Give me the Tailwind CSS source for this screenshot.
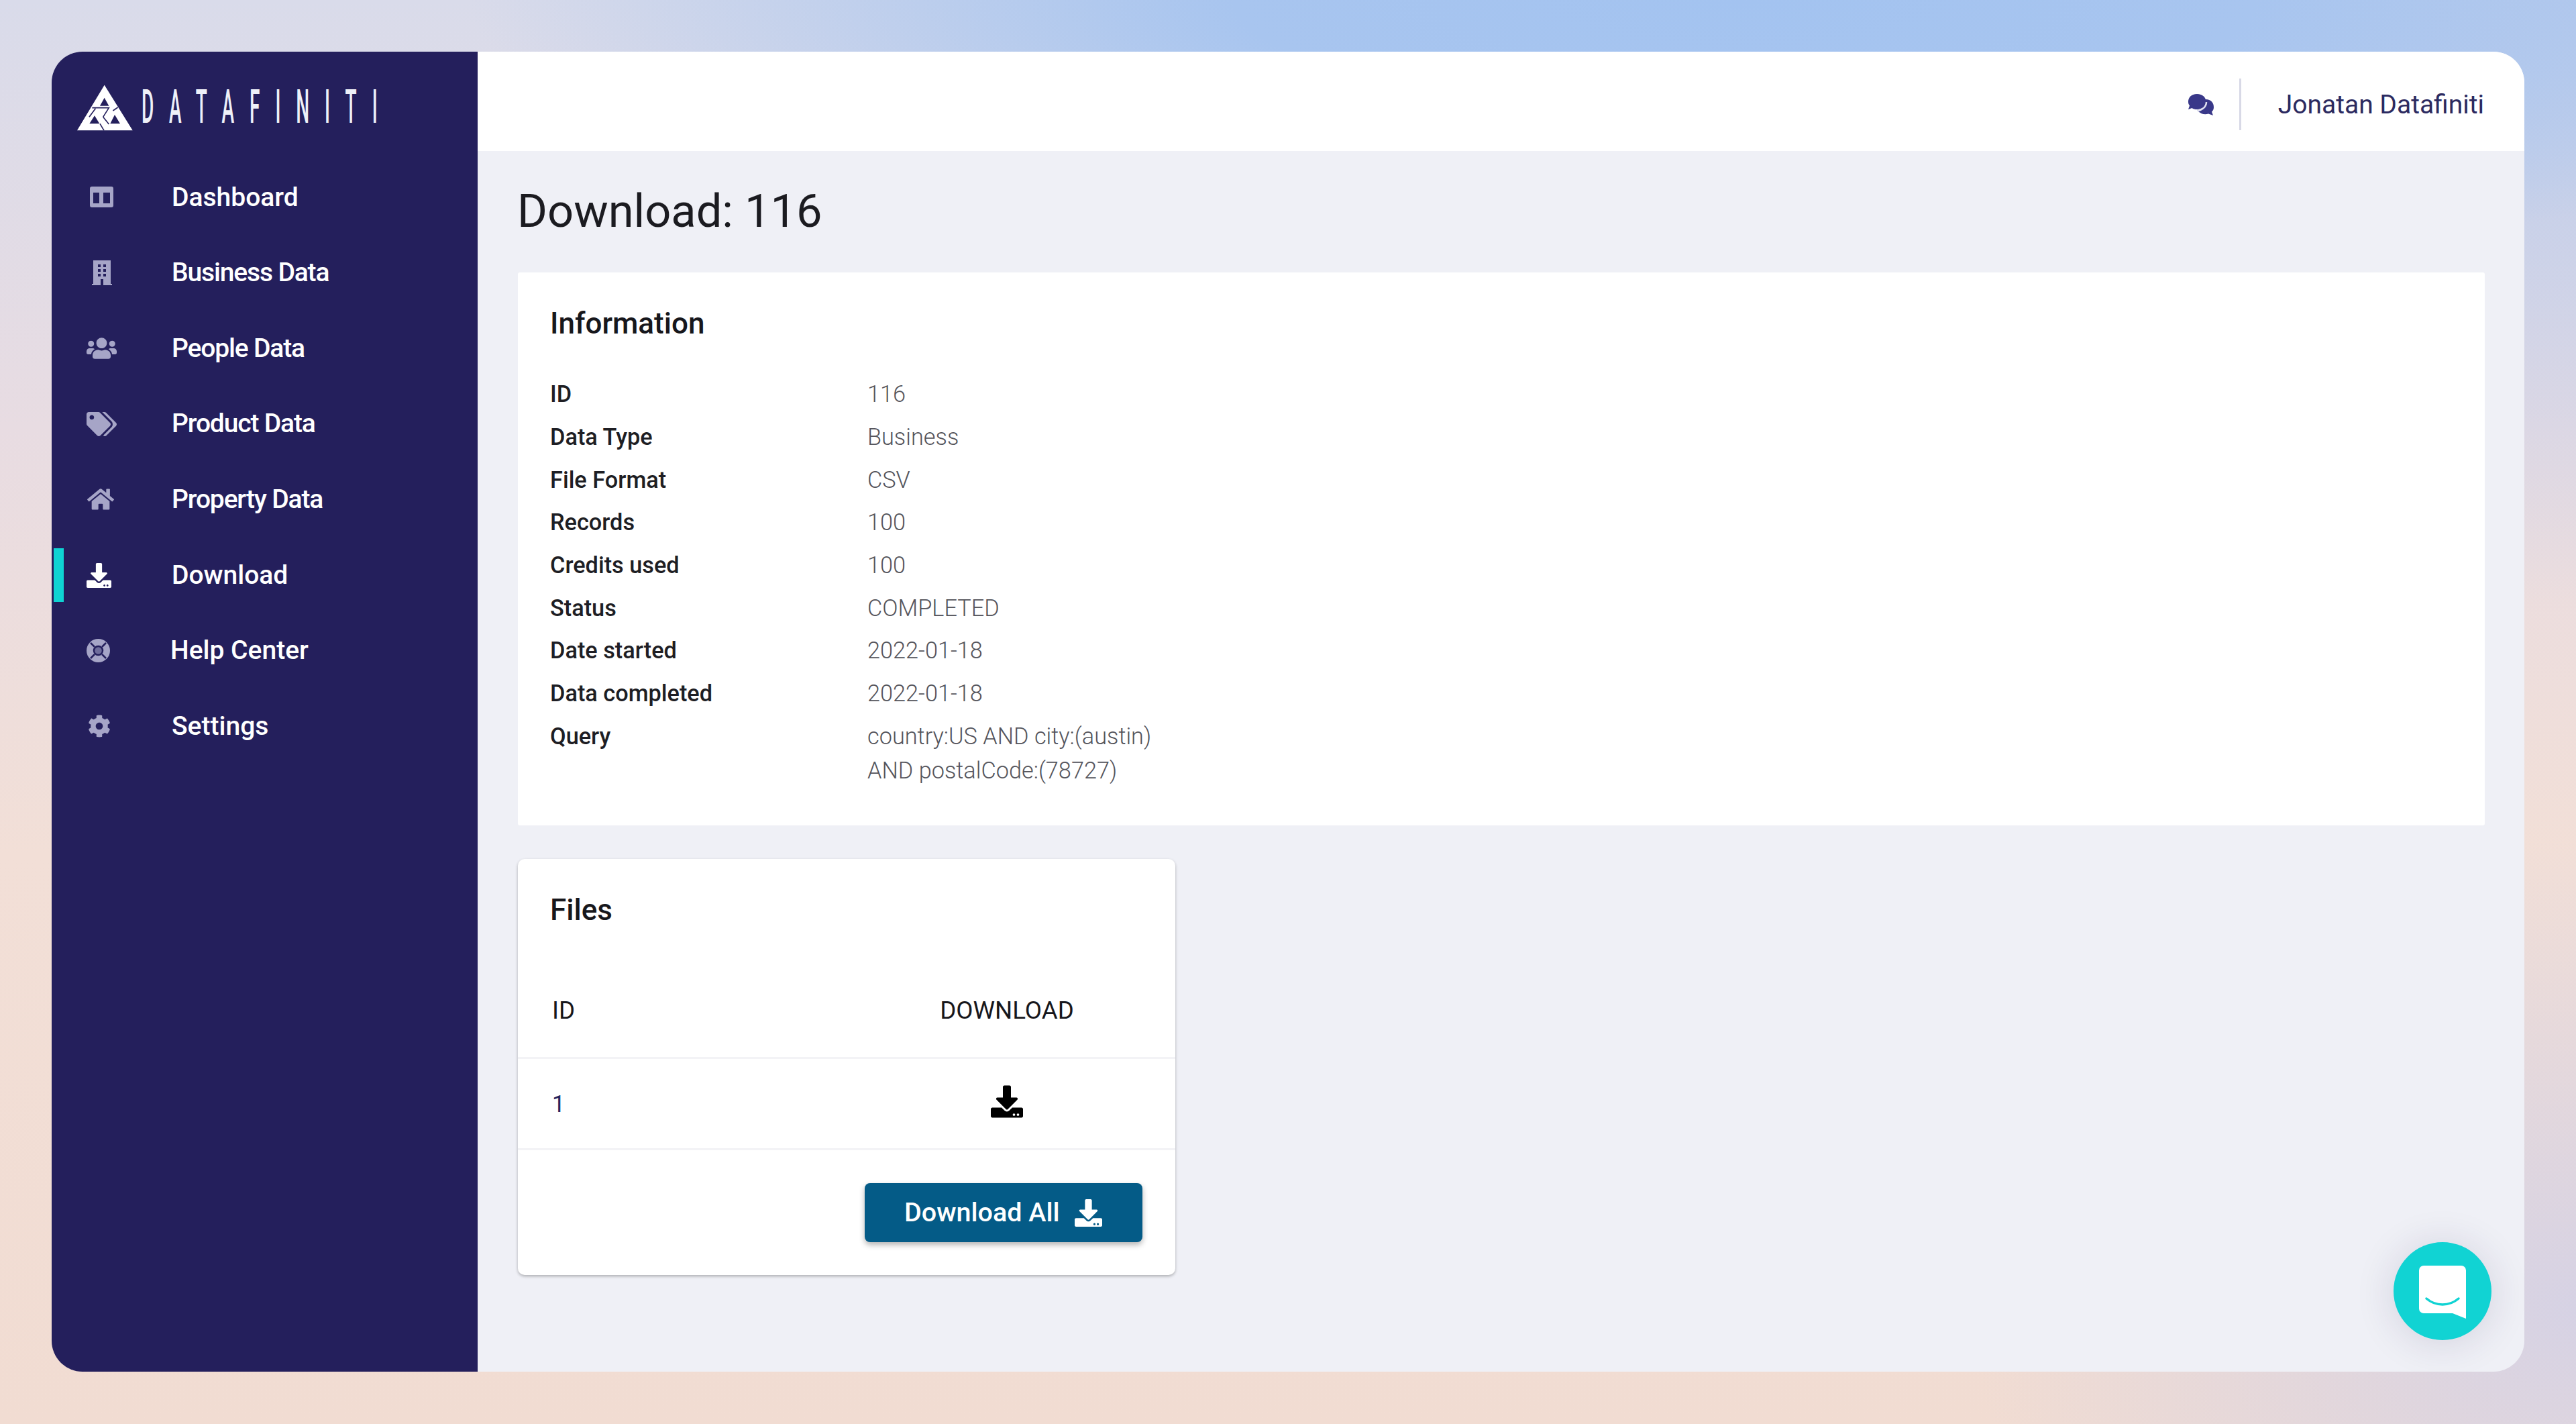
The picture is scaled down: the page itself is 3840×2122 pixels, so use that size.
<!DOCTYPE html>
<html lang="en">
<head>
<meta charset="utf-8">
<title>Download: 116</title>
<script src="https://cdn.jsdelivr.net/npm/@tailwindcss/browser@4"></script>
</head>
<body class="m-0 font-['Roboto',sans-serif]">
<div class="w-[3840px] h-[2122px] pl-[77px] pt-[77px] overflow-hidden bg-[radial-gradient(ellipse_1900px_420px_at_2600px_0px,#a3c3f0_0%,#a8c5ef_40%,rgba(168,197,239,0)_100%),radial-gradient(ellipse_2200px_900px_at_3840px_0px,#bccbea_0%,rgba(188,203,234,0)_100%),radial-gradient(ellipse_900px_700px_at_3840px_1950px,#d6d2e4_0%,rgba(214,210,228,0)_100%),linear-gradient(180deg,#d9dbea_0%,#e8dce2_30%,#f2dfd7_60%,#f1dcd2_100%)]">
  <div class="relative flex w-[3686px] h-[1967px] rounded-[46px] overflow-hidden">
    <aside class="w-[635px] shrink-0 bg-[#241f5c] text-white">
      <div class="flex items-start h-[160.500px] pt-[38px] pl-[28px]">
        <svg class="w-[110px] h-[90px] shrink-0" viewBox="0 0 330 270">
          <path fill="#fff" fill-rule="evenodd" d="M152 35L278 238H30ZM152 92L132 128H172ZM108 172L85 208H130ZM198 168L178 208H222Z"/>
          <path fill="none" stroke="#241f5c" stroke-width="5" d="M97 137H172L146 178M112 140L84 178M132 208L150 238M190 150L212 135M146 178L172 210"/>
        </svg>
        <span class="block mt-[9px] ml-[-4px] w-[20px] text-[70px] leading-[70px] font-medium tracking-[57.400px] whitespace-nowrap origin-left scale-x-[0.4] text-[#eef0f8]">DATAFINITI</span>
      </div>
      <nav class="text-[39px] font-medium">
        <a class="relative flex items-center h-[112.65px]"><svg class="ml-[57px] w-[35px] h-[31px] mr-[87px]" viewBox="0 0 35 31"><path fill="#a6a5c7" fill-rule="evenodd" d="M3 0H32A3 3 0 0 1 35 3V28A3 3 0 0 1 32 31H3A3 3 0 0 1 0 28V3A3 3 0 0 1 3 0ZM5 9V25H14V9ZM20 9V25H30V9Z"/></svg>Dashboard</a>
        <a class="relative flex items-center h-[112.65px] tracking-[-1.150px]"><svg class="ml-[60px] w-[30px] h-[37px] mr-[89px]" viewBox="0 0 30 37"><path fill="#a6a5c7" fill-rule="evenodd" d="M2 0H28V35H30V37H0V35H2ZM9 6V10H13V6ZM17 6V10H21V6ZM9 13V17H13V13ZM17 13V17H21V13ZM9 20V24H13V20ZM17 20V24H21V20ZM13 28V37H17V28Z"/></svg>Business Data</a>
        <a class="relative flex items-center h-[112.65px] tracking-[-1.150px]"><svg class="ml-[52px] w-[45px] h-[36px] mr-[82px]" viewBox="0 0 640 512"><path fill="#a6a5c7" d="M96 224c35.3 0 64-28.7 64-64s-28.7-64-64-64-64 28.7-64 64 28.7 64 64 64zm448 0c35.3 0 64-28.7 64-64s-28.7-64-64-64-64 28.7-64 64 28.7 64 64 64zm32 32h-64c-17.6 0-33.5 7.1-45.1 18.6 40.3 22.1 68.9 62 75.1 109.4h66c17.7 0 32-14.3 32-32v-32c0-35.3-28.7-64-64-64zm-256 0c61.9 0 112-50.1 112-112S381.9 32 320 32 208 82.1 208 144s50.1 112 112 112zm76.8 32h-8.3c-20.8 10-43.9 16-68.5 16s-47.6-6-68.5-16h-8.3C179.6 288 128 339.6 128 403.2V432c0 26.5 21.5 48 48 48h288c26.5 0 48-21.5 48-48v-28.8c0-63.6-51.6-115.2-115.2-115.2zm-223.7-13.4C161.5 263.1 145.6 256 128 256H64c-35.3 0-64 28.7-64 64v32c0 17.7 14.3 32 32 32h65.9c6.3-47.4 34.9-87.3 75.2-109.4z"/></svg>People Data</a>
        <a class="relative flex items-center h-[112.65px] tracking-[-1.150px]"><svg class="ml-[52px] w-[45px] h-[36px] mr-[82px]" viewBox="0 0 640 512"><path fill="#a6a5c7" d="M497.941 225.941L286.059 14.059A48 48 0 0 0 252.118 0H48C21.49 0 0 21.49 0 48v204.118a48 48 0 0 0 14.059 33.941l211.882 211.882c18.744 18.745 49.136 18.746 67.882 0l204.118-204.118c18.745-18.745 18.745-49.137 0-67.882zM112 160c-26.51 0-48-21.49-48-48s21.49-48 48-48 48 21.49 48 48-21.49 48-48 48zm513.941 133.823L421.823 497.941c-18.745 18.745-49.137 18.745-67.882 0l-.36-.36L527.64 323.522c16.999-16.999 26.36-39.6 26.36-63.64s-9.362-46.641-26.36-63.64L331.397 0h48.721a48 48 0 0 1 33.941 14.059l211.882 211.882c18.745 18.745 18.745 49.137 0 67.882z"/></svg>Product Data</a>
        <a class="relative flex items-center h-[112.65px] tracking-[-1.150px]"><svg class="ml-[53px] w-[40px] h-[36px] mr-[86px]" viewBox="0 0 576 512"><path fill="#a6a5c7" d="M280.37 148.26L96 300.11V464a16 16 0 0 0 16 16l112.06-.29a16 16 0 0 0 15.92-16V368a16 16 0 0 1 16-16h64a16 16 0 0 1 16 16v95.64a16 16 0 0 0 16 16.05L464 480a16 16 0 0 0 16-16V300L295.67 148.26a12.19 12.19 0 0 0-15.3 0zM571.6 251.47L488 182.56V44.05a12 12 0 0 0-12-12h-56a12 12 0 0 0-12 12v72.61L318.47 43a48 48 0 0 0-61 0L4.34 251.47a12 12 0 0 0-1.6 16.9l25.5 31A12 12 0 0 0 45.15 301l235.22-193.74a12.19 12.19 0 0 1 15.3 0L530.9 301a12 12 0 0 0 16.9-1.6l25.5-31a12 12 0 0 0-1.7-16.93z"/></svg>Property Data</a>
        <a class="relative flex items-center h-[112.65px]"><span class="absolute left-[3px] top-[16px] w-[15px] h-[80px] bg-[#0fd3d3]"></span><svg class="ml-[52px] w-[37px] h-[37px] mr-[90px]" viewBox="0 0 512 512"><path fill="#fff" d="M216 0h80c13.3 0 24 10.7 24 24v168h87.7c17.8 0 26.7 21.5 14.1 34.1L269.7 378.3c-7.5 7.5-19.8 7.5-27.3 0L90.1 226.1c-12.6-12.6-3.7-34.1 14.1-34.1H192V24c0-13.3 10.7-24 24-24zm296 376v112c0 13.3-10.7 24-24 24H24c-13.3 0-24-10.7-24-24V376c0-13.3 10.7-24 24-24h146.7l49 49c20.1 20.1 52.5 20.1 72.6 0l49-49H488c13.3 0 24 10.7 24 24zm-124 88c0-11-9-20-20-20s-20 9-20 20 9 20 20 20 20-9 20-20zm64 0c0-11-9-20-20-20s-20 9-20 20 9 20 20 20 20-9 20-20z"/></svg>Download</a>
        <a class="relative flex items-center h-[112.65px]"><svg class="ml-[52px] w-[35px] h-[35px] mr-[90px]" viewBox="0 0 35 35"><circle cx="17.5" cy="17.5" r="17.5" fill="#a6a5c7"/><path stroke="#241f5c" stroke-width="2.5" d="M6 6L12 12M29 6L23 12M6 29L12 23M29 29L23 23"/><circle cx="17.5" cy="17.5" r="6.5" fill="#6f6d9c" stroke="#241f5c" stroke-width="2.5"/></svg>Help Center</a>
        <a class="relative flex items-center h-[112.65px]"><svg class="ml-[54px] w-[34px] h-[34px] mr-[91px]" viewBox="0 0 512 512"><path fill="#a6a5c7" d="M487.4 315.7l-42.6-24.6c4.3-23.2 4.3-47 0-70.2l42.6-24.6c4.9-2.8 7.1-8.6 5.5-14-11.1-35.6-30-67.8-54.7-94.6-3.8-4.1-10-5.1-14.8-2.3L380.8 110c-17.9-15.4-38.5-27.3-60.8-35.1V25.8c0-5.6-3.9-10.5-9.4-11.7-36.7-8.2-74.3-7.8-109.2 0-5.5 1.2-9.4 6.1-9.4 11.7V75c-22.2 7.9-42.8 19.8-60.8 35.1L88.7 85.5c-4.9-2.8-11-1.9-14.8 2.3-24.7 26.7-43.6 58.9-54.7 94.6-1.7 5.4.6 11.2 5.5 14L67.3 221c-4.3 23.2-4.3 47 0 70.2l-42.6 24.6c-4.9 2.8-7.1 8.6-5.5 14 11.1 35.6 30 67.8 54.7 94.6 3.8 4.1 10 5.1 14.8 2.3l42.6-24.6c17.9 15.4 38.5 27.3 60.8 35.1v49.2c0 5.6 3.9 10.5 9.4 11.7 36.7 8.2 74.3 7.8 109.2 0 5.5-1.2 9.4-6.1 9.4-11.7v-49.2c22.2-7.9 42.8-19.8 60.8-35.1l42.6 24.6c4.9 2.8 11 1.9 14.8-2.3 24.7-26.7 43.6-58.9 54.7-94.6 1.5-5.5-.7-11.3-5.6-14.1zM256 336c-44.1 0-80-35.9-80-80s35.9-80 80-80 80 35.9 80 80-35.9 80-80 80z"/></svg>Settings</a>
      </nav>
    </aside>
    <main class="flex-1 min-w-0 bg-[#eff0f6]">
      <header class="flex items-center justify-end h-[148px] pt-[9px] pr-[60px] bg-white">
        <svg class="w-[38px] h-[32px]" viewBox="0 0 38 32"><path fill="#393889" d="M22 18A11 11 0 0 1 26 8C34 8 38 13 38 20C38 23 36.500 25.500 35 26.500L37 32L30 29.500C25 31 19 30 15 26C19 26 22 23 22 18Z"/><path fill="#393889" d="M13 0C21 0 26.500 5 26.500 11.500C26.500 18 21 23 13 23C10 23 7.500 22.500 5.500 21L0 23L2 17.500C.5 15.500 0 14 0 11.500C0 5 5 0 13 0Z"/><path fill="none" stroke="#dfe0f0" stroke-width="2.500" d="M27 12C27 19 21 24.500 13 24.500"/></svg>
        <span class="w-[3px] h-[77px] ml-[38px] mr-[55px] bg-[#d8d9e6]"></span>
        <span class="text-[39px] leading-[46px] font-normal text-[#2c2a60]">Jonatan Datafiniti</span>
      </header>
      <div class="px-[60px] pr-[59px]">
        <h1 class="pt-[48px] pb-[49px] ml-[-1px] text-[68.600px] leading-[84px] font-normal text-[#1b1b20]">Download: 116</h1>
        <section class="h-[824px] pt-[44px] pl-[48px] bg-white rounded-[3px]">
          <h2 class="mb-[42px] text-[44px] leading-[64px] font-medium text-[#17171c]">Information</h2>
          <dl class="grid grid-cols-[473px_1fr] text-[34.300px] leading-[51px]">
            <dt class="py-[6.330px] font-medium text-[#1e1e24]">ID</dt><dd class="py-[6.330px] font-light text-[#55555c]">116</dd>
            <dt class="py-[6.330px] font-medium text-[#1e1e24]">Data Type</dt><dd class="py-[6.330px] font-light text-[#55555c]">Business</dd>
            <dt class="py-[6.330px] font-medium text-[#1e1e24]">File Format</dt><dd class="py-[6.330px] font-light text-[#55555c]">CSV</dd>
            <dt class="py-[6.330px] font-medium text-[#1e1e24]">Records</dt><dd class="py-[6.330px] font-light text-[#55555c]">100</dd>
            <dt class="py-[6.330px] font-medium text-[#1e1e24]">Credits used</dt><dd class="py-[6.330px] font-light text-[#55555c]">100</dd>
            <dt class="py-[6.330px] font-medium text-[#1e1e24]">Status</dt><dd class="py-[6.330px] font-light text-[#55555c]">COMPLETED</dd>
            <dt class="py-[6.330px] font-medium text-[#1e1e24]">Date started</dt><dd class="py-[6.330px] font-light text-[#55555c]">2022-01-18</dd>
            <dt class="py-[6.330px] font-medium text-[#1e1e24]">Data completed</dt><dd class="py-[6.330px] font-light text-[#55555c]">2022-01-18</dd>
            <dt class="py-[6.330px] font-medium text-[#1e1e24]">Query</dt><dd class="py-[6.330px] font-light text-[#55555c]">country:US AND city:(austin)<br>AND postalCode:(78727)</dd>
          </dl>
        </section>
        <section class="mt-[50px] w-[980px] h-[620px] pt-[44px] bg-white rounded-[10px] shadow-[0_2px_4px_rgba(0,0,0,0.28)]">
          <h2 class="pl-[48px] text-[44px] leading-[64px] font-medium text-[#17171c]">Files</h2>
          <div class="flex items-end h-[189.500px] pb-[46px] border-b-[3px] border-[#f3f3f6] text-[36.700px] leading-[46px] text-[#17171c]">
            <span class="w-[480px] pl-[51px]">ID</span>
            <span class="w-[498px] text-center">DOWNLOAD</span>
          </div>
          <div class="flex items-center h-[136px] border-b-[3px] border-[#f3f3f6]">
            <span class="w-[480px] pl-[51px] pt-[4px] text-[34.300px] text-[#26245c]">1</span>
            <span class="flex justify-center w-[498px] mt-[-5px]"><svg class="w-[48px] h-[49px]" viewBox="0 0 512 512"><path fill="#000" d="M216 0h80c13.3 0 24 10.7 24 24v168h87.7c17.8 0 26.7 21.5 14.1 34.1L269.7 378.3c-7.5 7.5-19.8 7.5-27.3 0L90.1 226.1c-12.6-12.6-3.7-34.1 14.1-34.1H192V24c0-13.3 10.7-24 24-24zm296 376v112c0 13.3-10.7 24-24 24H24c-13.3 0-24-10.7-24-24V376c0-13.3 10.7-24 24-24h146.7l49 49c20.1 20.1 52.5 20.1 72.6 0l49-49H488c13.3 0 24 10.7 24 24zm-124 88c0-11-9-20-20-20s-20 9-20 20 9 20 20 20 20-9 20-20zm64 0c0-11-9-20-20-20s-20 9-20 20 9 20 20 20 20-9 20-20z"/></svg></span>
          </div>
          <div class="flex justify-end pt-[49.500px] pr-[49px]">
            <button class="flex items-center gap-[22px] w-[414px] h-[88px] pl-[59px] rounded-[8px] bg-[#045b87] text-white text-[39.500px] font-medium shadow-[0_4px_8px_rgba(0,0,0,0.3)]">Download All<svg class="w-[41px] h-[41px]" viewBox="0 0 512 512"><path fill="#fff" d="M216 0h80c13.3 0 24 10.7 24 24v168h87.7c17.8 0 26.7 21.5 14.1 34.1L269.7 378.3c-7.5 7.5-19.8 7.5-27.3 0L90.1 226.1c-12.6-12.6-3.7-34.1 14.1-34.1H192V24c0-13.3 10.7-24 24-24zm296 376v112c0 13.3-10.7 24-24 24H24c-13.3 0-24-10.7-24-24V376c0-13.3 10.7-24 24-24h146.7l49 49c20.1 20.1 52.5 20.1 72.6 0l49-49H488c13.3 0 24 10.7 24 24zm-124 88c0-11-9-20-20-20s-20 9-20 20 9 20 20 20 20-9 20-20zm64 0c0-11-9-20-20-20s-20 9-20 20 9 20 20 20 20-9 20-20z"/></svg></button>
          </div>
        </section>
      </div>
    </main>
    <div class="absolute right-[49px] bottom-[47px] flex items-center justify-center w-[146px] h-[146px] rounded-full bg-[#11d3d3] shadow-[0_4px_60px_rgba(40,30,80,0.14)]">
      <svg class="w-[70px] h-[79px] mt-[2px]" viewBox="0 0 70 79"><path fill="#fff" d="M7 0H63A7 7 0 0 1 70 7V79L50 71H7A7 7 0 0 1 0 64V7A7 7 0 0 1 7 0Z"/><path fill="none" stroke="#11d3d3" stroke-width="3.500" stroke-linecap="round" d="M11 49C25 61 45 61 59 49"/></svg>
    </div>
  </div>
</div>
</body>
</html>
